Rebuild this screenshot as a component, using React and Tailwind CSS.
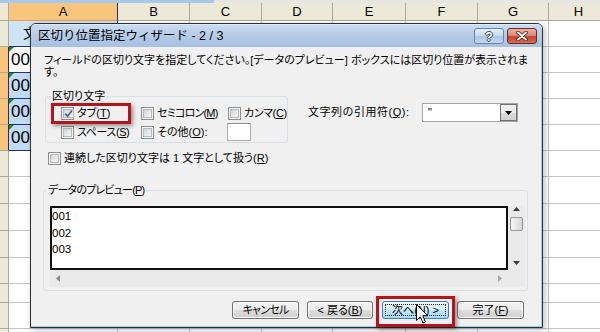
import React from "react";

const cols = [
  { n: "A", w: "w-[109px]", sel: true },
  { n: "B", w: "w-[72px]" },
  { n: "C", w: "w-[72px]" },
  { n: "D", w: "w-[71px]" },
  { n: "E", w: "w-[73px]" },
  { n: "F", w: "w-[72px]" },
  { n: "G", w: "w-[71px]" },
  { n: "H", w: "w-[60px]" },
];

const rows = [
  { h: "h-[26px]", kind: "title" },
  { h: "h-[26px]", kind: "data", text: "001", active: true },
  { h: "h-[26px]", kind: "data", text: "002" },
  { h: "h-[26px]", kind: "data", text: "003" },
  { h: "h-[26px]", kind: "data", text: "004" },
  { h: "h-[26px]" },
  { h: "h-[27px]" },
  { h: "h-[27px]" },
  { h: "h-[27px]" },
  { h: "h-[26px]" },
  { h: "h-[19px]" },
  { h: "h-[26px]" },
  { h: "h-[26px]" },
];

function GreenTri() {
  return (
    <span className="absolute left-0 top-0 w-0 h-0 border-t-[5px] border-r-[5px] border-t-[#1c8a1c] border-r-transparent" />
  );
}

function Sheet() {
  return (
    <div className="flex flex-col">
      <div className="flex h-[3px]">
        <div className="w-[214px] bg-[#a9c8ee]" />
        <div className="flex-1 bg-[#e6e6e6]" />
      </div>
      <div className="flex h-[18px]">
        <div className="w-[9px] shrink-0 border-r border-b border-[#aca899] bg-[#ece9d8]" />
        {cols.map((c) => (
          <div
            key={c.n}
            className={`${c.w} shrink-0 flex items-center justify-center text-[13px] leading-none border-r border-b ${
              c.sel
                ? "bg-[#f9c47c] border-r-[#1f2f7a] border-b-[#e0a050]"
                : "bg-[#ece9d8] border-[#aca899]"
            }`}
          >
            {c.n}
          </div>
        ))}
      </div>
      {rows.map((r, i) => (
        <div key={i} className={`flex ${r.h}`}>
          <div
            className={`w-[9px] shrink-0 border-r border-b ${
              r.kind === "data"
                ? "bg-[#f8c47e] border-r-[#1f2f7a] border-b-[#aca899]"
                : "bg-[#ece9d8] border-[#aca899]"
            }`}
          />
          {cols.map((c) => {
            if (c.sel && r.kind === "title") {
              return (
                <div
                  key={c.n}
                  className={`${c.w} shrink-0 relative bg-[#cde4f8] border-r border-b border-[#1f2f7a] pl-[14px] flex items-center text-[14px]`}
                >
                  文
                </div>
              );
            }
            if (c.sel && r.kind === "data") {
              return (
                <div
                  key={c.n}
                  className={`${c.w} shrink-0 relative border-r border-b border-[#1f2f7a] pl-[2px] flex items-center text-[17px] ${
                    r.active ? "bg-white" : "bg-[#c2dbf5]"
                  }`}
                >
                  <GreenTri />
                  {r.text}
                </div>
              );
            }
            return (
              <div
                key={c.n}
                className={`${c.w} shrink-0 border-r border-b border-[#c4c4c4] bg-white`}
              />
            );
          })}
        </div>
      ))}
    </div>
  );
}

function Check({ checked }) {
  return (
    <span className="w-[13px] h-[13px] shrink-0 border border-[#8e8f8f] bg-[#f4f4f4] p-[1px] flex">
      <span className="flex-1 border border-[#b6b9bd] bg-[linear-gradient(135deg,#d2d5d9,#f7f7f7)] flex items-center justify-center">
        {checked && (
          <svg width="9" height="9" viewBox="0 0 9 9">
            <path d="M1.3 4.6 L3.6 7.2 L8 1.4" fill="none" stroke="#4a5b8c" strokeWidth="1.7" />
          </svg>
        )}
      </span>
    </span>
  );
}

function CbItem({ checked, children, w, t }) {
  return (
    <div className={`${w} shrink-0 flex items-center gap-[3px] whitespace-nowrap`}>
      <Check checked={checked} />
      <span className={t}>{children}</span>
    </div>
  );
}

function U({ children }) {
  return <span className="underline underline-offset-[1px]">{children}</span>;
}

function Btn({ children, w, hot, t }) {
  return (
    <div
      className={`${w} h-[18px] shrink-0 rounded-[3px] border flex items-center justify-center p-[2px] whitespace-nowrap ${
        hot
          ? "border-[#3c7fb1] bg-[linear-gradient(#eaf6fd,#d9f0fc_50%,#bee6fd_50%,#a7d9f5)]"
          : "border-[#707070] bg-[linear-gradient(#f2f2f2,#ebebeb_50%,#dddddd_50%,#cfcfcf)] shadow-[inset_0_0_0_1px_#fbfbfb]"
      }`}
    >
      <div
        className={`w-full h-full flex items-center justify-center ${t || ""} ${
          hot ? "border border-dotted border-[#222]" : ""
        }`}
      >
        {children}
      </div>
    </div>
  );
}

function Dialog() {
  return (
    <div className="absolute left-[30px] top-[23px] w-[513px] h-[305px] rounded-t-[6px] border border-[#2e2e2e] overflow-hidden flex flex-col bg-[#f0f0f0] shadow-[2px_2px_6px_rgba(0,0,0,0.25)]">
      {/* title bar */}
      <div className="h-[23px] shrink-0 flex items-center pl-[7px] pr-[5px] bg-[linear-gradient(#cbdcf0,#b7cde9_40%,#a6c0e2)] border-t border-t-[#dfeaf7]">
        <span className="text-[12.5px] text-black [font-feature-settings:normal]">
          区切り位置指定ウィザード - 2 / 3
        </span>
        <div className="ml-auto flex gap-[3px]">
          <div className="w-[30px] h-[16px] rounded-[3px] border border-[#6a84aa] bg-[linear-gradient(#e6eef8,#ccdcf0_45%,#aec7e7_55%,#c3d7f0)] flex items-center justify-center">
            <span className="text-[13px] font-bold leading-none text-white [text-shadow:1px_0_#3e4f6b,-1px_0_#3e4f6b,0_1px_#3e4f6b,0_-1px_#3e4f6b]">
              ?
            </span>
          </div>
          <div className="w-[30px] h-[16px] rounded-[3px] border border-[#6b2a1f] bg-[linear-gradient(#eab0a3,#dc8d7b_45%,#c5442c_55%,#d46c52)] flex items-center justify-center">
            <svg width="12" height="10" viewBox="0 0 12 10">
              <path d="M2 1.5 L10 8.5 M10 1.5 L2 8.5" stroke="#4a1a12" strokeWidth="3.6" strokeLinecap="round" />
              <path d="M2 1.5 L10 8.5 M10 1.5 L2 8.5" stroke="#ffffff" strokeWidth="2" strokeLinecap="round" />
            </svg>
          </div>
        </div>
      </div>
      {/* body */}
      <div className="flex-1 flex flex-col border-r border-b border-[#8fd3f5] text-[11px] text-black">
        <div className="pl-[13px] pt-[7px] leading-[12px]">
          <div className="whitespace-nowrap">
            フィールドの区切り文字を指定してください。[データのプレビュー] ボックスには区切り位置が表示されま
          </div>
          <div>す。</div>
        </div>
        <div className="flex mt-[10px]">
          <fieldset className="ml-[14px] w-[243px] shrink-0 border border-[#d5dfe5] rounded-[3px] pl-[15px]">
            <legend className="ml-[-10px] px-[1px] leading-[16px]">区切り文字</legend>
            <div className="flex h-[19px] items-center">
              <CbItem w="w-[80px]" checked>
                タブ(<U>T</U>)
              </CbItem>
              <CbItem w="w-[87px]" t="tracking-[-0.8px]">
                セミコロン(<U>M</U>)
              </CbItem>
              <CbItem w="w-auto" t="tracking-[-0.4px]">
                カンマ(<U>C</U>)
              </CbItem>
            </div>
            <div className="flex h-[19px] items-center">
              <CbItem w="w-[80px]" t="tracking-[-0.4px]">
                スペース(<U>S</U>)
              </CbItem>
              <CbItem w="w-[86px]">
                その他(<U>O</U>):
              </CbItem>
              <div className="w-[24px] h-[18px] shrink-0 border border-[#abadb3] border-t-[#8e8f8f] bg-white mb-[2px]" />
            </div>
          </fieldset>
          <div className="ml-[20px] mt-[15px] h-[19px] flex items-center">
            <span className="w-[114px] shrink-0 whitespace-nowrap [font-feature-settings:normal] tracking-[0.5px]">
              文字列の引用符(<U>Q</U>):
            </span>
            <div className="w-[96px] h-[19px] border border-[#a5a5a5] bg-white flex items-center">
              <span className="pl-[5px] flex-1 text-[11px]">"</span>
              <div className="w-[17px] h-[17px] border border-[#707070] bg-[linear-gradient(#f2f2f2,#ebebeb_50%,#dddddd_50%,#cfcfcf)] flex items-center justify-center">
                <svg width="7" height="4" viewBox="0 0 7 4">
                  <path d="M0 0 H7 L3.5 4 Z" fill="#000" />
                </svg>
              </div>
            </div>
          </div>
        </div>
        <div className="mt-[6px] pl-[17px] h-[19px] flex items-center gap-[3px]">
          <Check />
          <span>
            連続した区切り文字は 1 文字として扱う(<U>R</U>)
          </span>
        </div>
        <fieldset className="mt-[14px] ml-[12px] w-[485px] border border-[#d5dfe5] rounded-[3px] pl-[6px] pt-[8px] pb-[3px]">
          <legend className="ml-[-4px] px-[2px] leading-[16px] tracking-[-0.8px]">
            データのプレビュー(<U>P</U>)
          </legend>
          <div className="flex">
            <div className="flex flex-col">
              <div className="w-[458px] h-[64px] border-2 border-[#111] bg-white font-['Liberation_Sans',sans-serif] text-[11.5px] leading-[16.5px]">
                <div>001</div>
                <div>002</div>
                <div>003</div>
              </div>
              <div className="w-[458px] h-[17px] bg-[#eaeaea] flex items-center justify-between px-[6px]">
                <svg width="4" height="7" viewBox="0 0 4 7">
                  <path d="M4 0 V7 L0 3.5 Z" fill="#8a8a8a" />
                </svg>
                <svg width="4" height="7" viewBox="0 0 4 7">
                  <path d="M0 0 V7 L4 3.5 Z" fill="#a8a8a8" />
                </svg>
              </div>
            </div>
            <div className="w-[17px] flex flex-col bg-[#eaeaea]">
              <div className="h-[64px] flex flex-col items-center pt-[1px]">
                <svg width="7" height="4" viewBox="0 0 7 4">
                  <path d="M0 4 H7 L3.5 0 Z" fill="#3c3c3c" />
                </svg>
                <div className="mt-[6px] w-[13px] h-[14px] rounded-[2px] border border-[#979797] bg-[linear-gradient(90deg,#f6f6f6,#e4e4e4_55%,#d6d6d6)]" />
                <div className="flex-1" />
                <svg width="7" height="4" viewBox="0 0 7 4" className="mb-[5px]">
                  <path d="M0 0 H7 L3.5 4 Z" fill="#3c3c3c" />
                </svg>
              </div>
            </div>
          </div>
        </fieldset>
        <div className="mt-[10px] pl-[201px] flex">
          <Btn w="w-[67px]" t="tracking-[-0.8px]">
            キャンセル
          </Btn>
          <div className="w-[8px]" />
          <Btn w="w-[66px]">
            &lt; 戻る(<U>B</U>)
          </Btn>
          <div className="w-[9px]" />
          <Btn w="w-[67px]" hot>
            次へ(<U>N</U>) &gt;
          </Btn>
          <div className="w-[8px]" />
          <Btn w="w-[67px]">
            完了(<U>F</U>)
          </Btn>
        </div>
      </div>
    </div>
  );
}

export default function App() {
  return (
    <div className="relative w-[600px] h-[332px] overflow-hidden bg-white font-['Liberation_Sans','Noto_Sans_CJK_JP',sans-serif] [font-feature-settings:'palt'] text-black">
      <Sheet />
      <Dialog />
      {/* highlight boxes */}
      <div className="absolute left-[51px] top-[103px] w-[80px] h-[21px] border-[3px] border-[#b4141c] shadow-[2px_2px_4px_rgba(0,0,0,0.4)]" />
      <div className="absolute left-[376px] top-[296px] w-[79px] h-[31px] border-[3px] border-[#b4141c] shadow-[2px_2px_4px_rgba(0,0,0,0.4)]" />
      {/* cursor */}
      <svg className="absolute left-[416px] top-[304px]" width="13" height="21" viewBox="0 0 13 21">
        <path d="M0.5 0.5 L0.5 16.5 L4.3 12.8 L7 19 L9.4 18 L6.8 11.8 L11.8 11.8 Z" fill="#fff" stroke="#000" strokeWidth="1" strokeLinejoin="round" />
      </svg>
    </div>
  );
}
